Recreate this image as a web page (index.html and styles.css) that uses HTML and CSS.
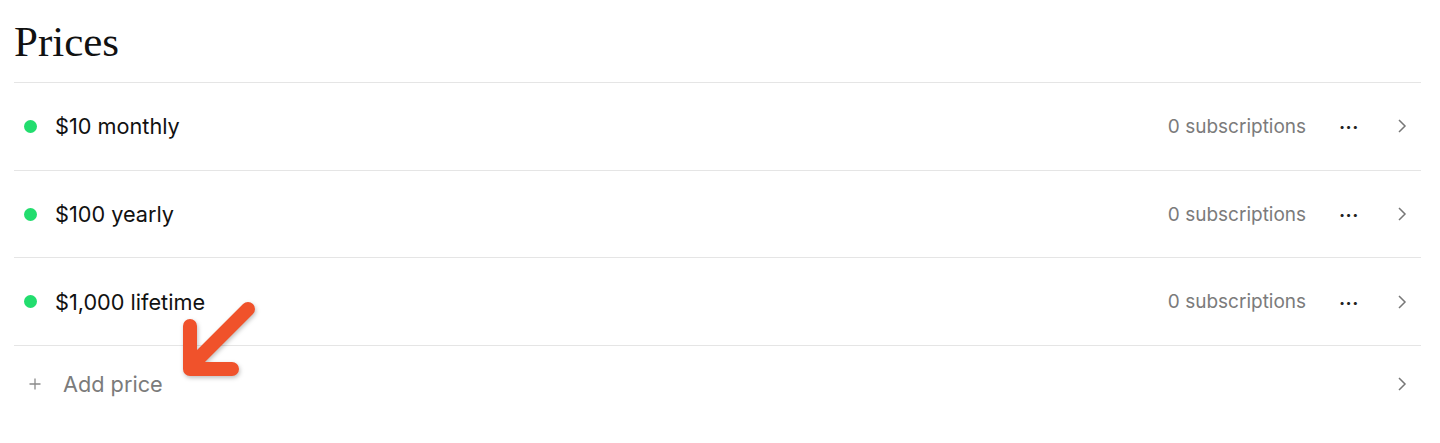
FILE: index.html
```html
<!DOCTYPE html>
<html lang="en">
<head>
    <meta charset="UTF-8">
    <title>Prices</title>
    <link rel="stylesheet" href="styles.css">
</head>
<body>
    <div class="prices">
        <h1 class="prices-title">Prices</h1>

        <div class="price-list">
            <div class="price-row">
                <span class="status-dot"></span>
                <span class="price-name">$10 monthly</span>
                <span class="price-subs">0 subscriptions</span>
                <span class="price-more">&bull;&bull;&bull;</span>
                <svg class="chevron" width="10" height="16" viewBox="0 0 10 16"><path d="M2 2l6 6-6 6" /></svg>
            </div>
            <div class="price-row">
                <span class="status-dot"></span>
                <span class="price-name">$100 yearly</span>
                <span class="price-subs">0 subscriptions</span>
                <span class="price-more">&bull;&bull;&bull;</span>
                <svg class="chevron" width="10" height="16" viewBox="0 0 10 16"><path d="M2 2l6 6-6 6" /></svg>
            </div>
            <div class="price-row">
                <span class="status-dot"></span>
                <span class="price-name">$1,000 lifetime</span>
                <span class="price-subs">0 subscriptions</span>
                <span class="price-more">&bull;&bull;&bull;</span>
                <svg class="chevron" width="10" height="16" viewBox="0 0 10 16"><path d="M2 2l6 6-6 6" /></svg>
            </div>
            <div class="price-row add-row">
                <svg class="add-plus" width="12" height="12" viewBox="0 0 12 12"><path d="M6 0.5v11M0.5 6h11" /></svg>
                <span class="add-label">Add price</span>
                <svg class="chevron" width="10" height="16" viewBox="0 0 10 16"><path d="M2 2l6 6-6 6" /></svg>

                <!-- annotation arrow -->
                <svg class="callout" width="100" height="90" viewBox="0 0 100 90">
                    <g stroke="#f0522b" stroke-width="14" stroke-linecap="round" stroke-linejoin="round" fill="none">
                        <path d="M79 8L26 61" />
                        <path d="M21 25V68H63" />
                    </g>
                </svg>
            </div>
        </div>
    </div>
</body>
</html>
```

FILE: styles.css
```css
body {
    margin: 0;
    background-color: #fff;
    font-family: Inter, 'Noto Sans', sans-serif;
    color: #111;
}
.prices {
    padding: 14px 19px 0 14px;
}
.prices-title {
    font-family: 'Liberation Serif', serif;
    font-weight: normal;
    font-size: 43px;
    line-height: 1;
    margin: 6px 0 19px 0;
    color: #111;
}
.price-list {
    border-top: 1px solid #e5e5e5;
}
.price-row {
    display: flex;
    align-items: center;
    height: 86.7px;
    border-bottom: 1px solid #e5e5e5;
    padding: 0 14px 0 10px;
    position: relative;
}
.status-dot {
    width: 13px;
    height: 13px;
    border-radius: 50%;
    background-color: #22dd6e;
    margin-right: 18px;
}
.price-name {
    font-size: 21.7px;
    flex: 1;
    color: #111;
}
.price-subs {
    font-size: 19px;
    color: #7b7b7b;
}
.price-more {
    font-size: 10px;
    letter-spacing: 1px;
    color: #222;
    margin: 0 38px 0 33px;
}
.chevron path {
    stroke: #777;
    stroke-width: 1.5;
    fill: none;
}
.add-row {
    border-bottom: none;
    height: 76px;
    padding-left: 15px;
}
.add-plus {
    margin-right: 22px;
}
.add-plus path {
    stroke: #8a8a8a;
    stroke-width: 1.3;
}
.add-label {
    flex: 1;
    font-size: 21.7px;
    color: #7b7b7b;
}
.callout {
    position: absolute;
    left: 155px;
    top: -45px;
    filter: drop-shadow(1px 2px 2px rgba(0, 0, 0, 0.25));
}
```
